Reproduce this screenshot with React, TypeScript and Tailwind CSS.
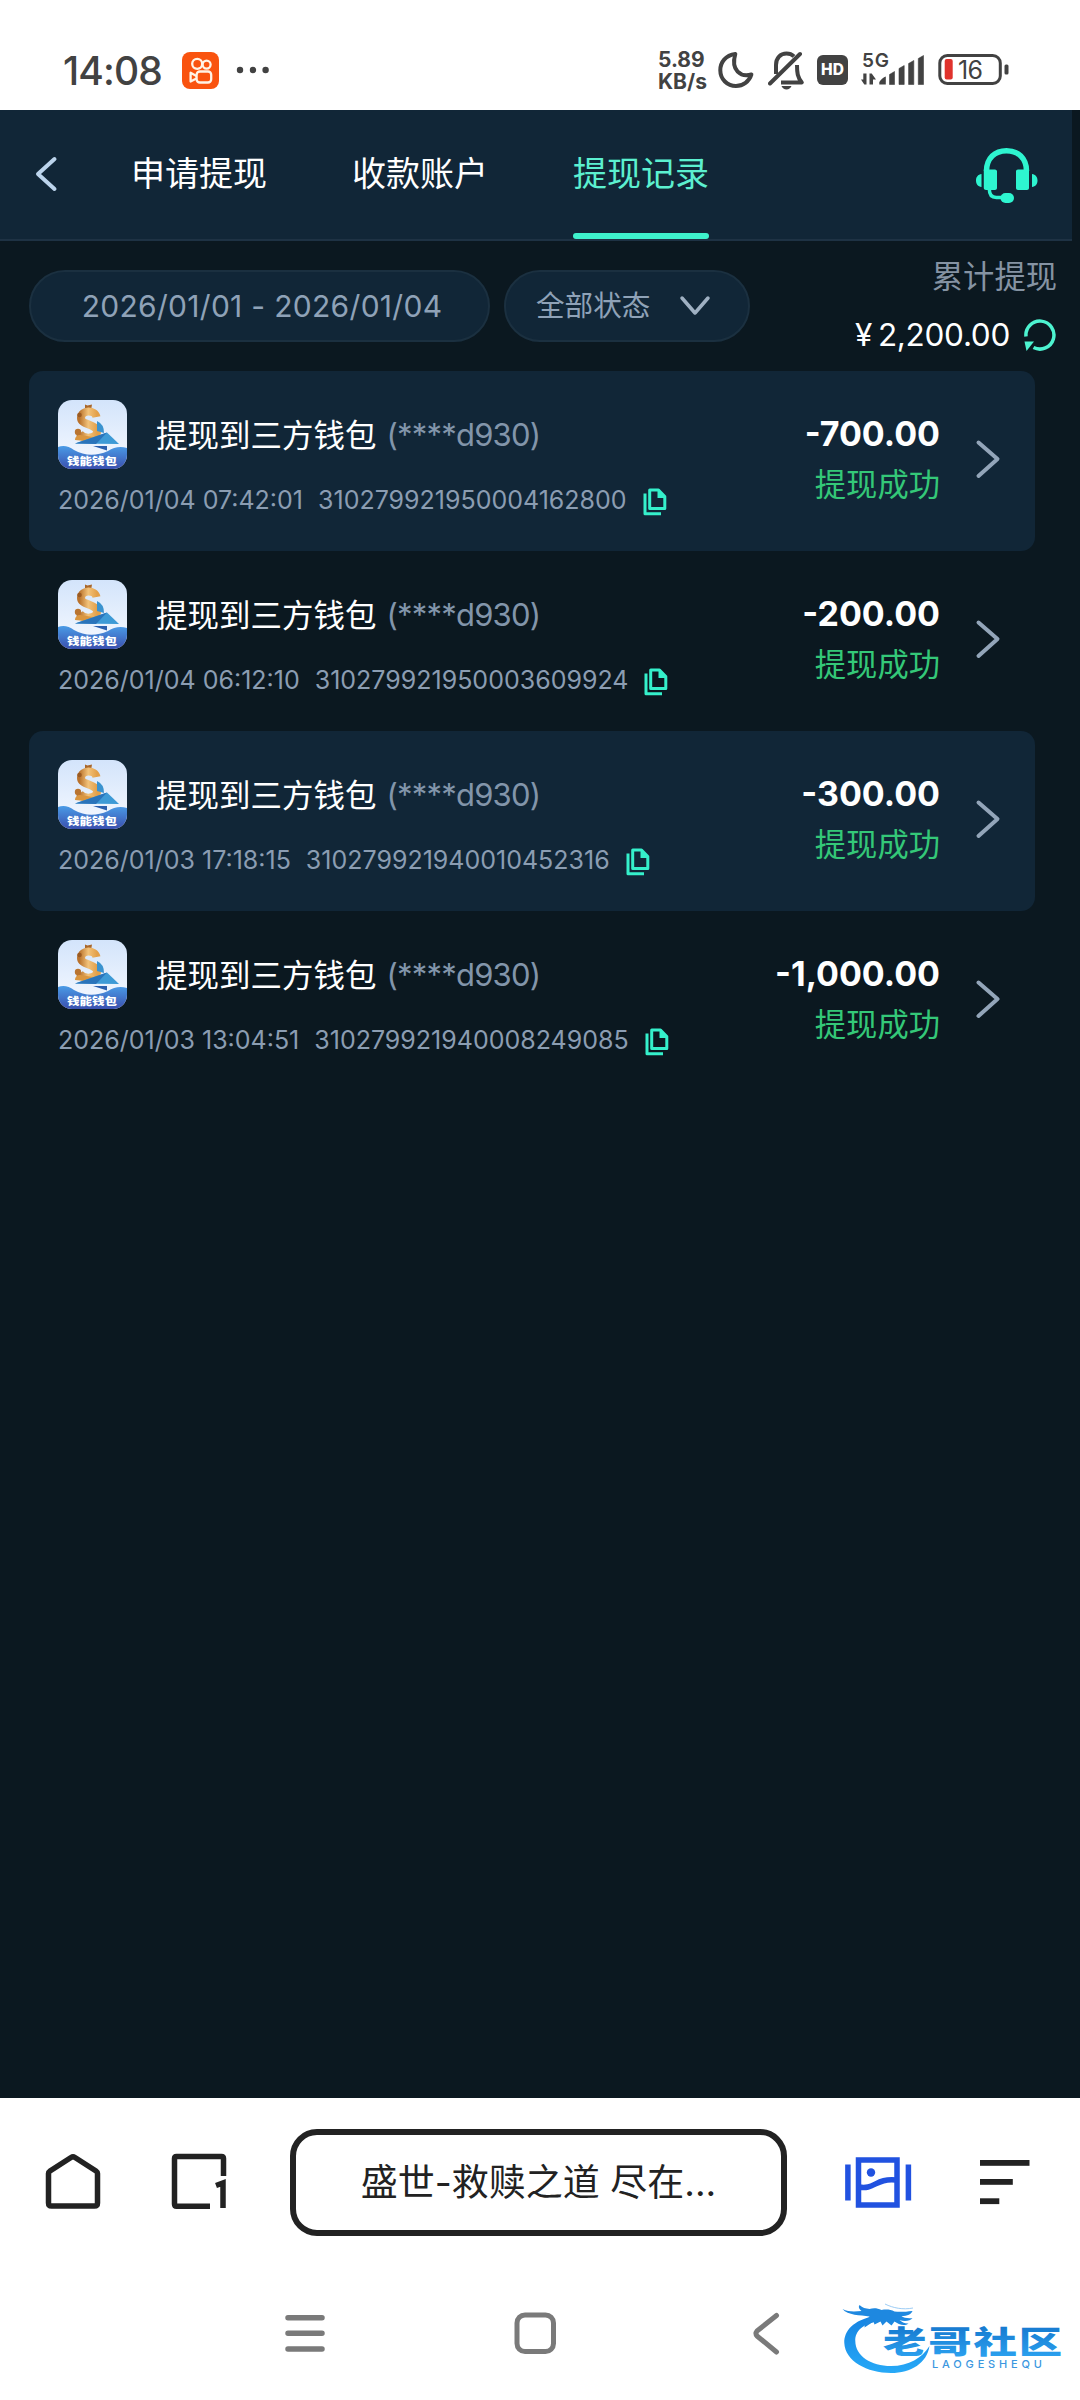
import React from 'react';

interface WithdrawRecord {
  id: string;
  time: string;
  order: string;
  amount: string;
}

const TABS = ['申请提现', '收款账户', '提现记录'];

const RECORDS: WithdrawRecord[] = [
  { id: 'r1', time: '2026/01/04 07:42:01', order: '310279921950004162800', amount: '-700.00' },
  { id: 'r2', time: '2026/01/04 06:12:10', order: '310279921950003609924', amount: '-200.00' },
  { id: 'r3', time: '2026/01/03 17:18:15', order: '310279921940010452316', amount: '-300.00' },
  { id: 'r4', time: '2026/01/03 13:04:51', order: '310279921940008249085', amount: '-1,000.00' },
];

const StatusBar: React.FC = () => (
  <div className="flex h-[110px] shrink-0 items-start bg-white pl-[63px] pr-[71px] pt-[50px] text-[#424242]">
    <div className="flex h-[40px] w-[119px] items-center whitespace-nowrap text-[39px] leading-none font-medium tracking-[-0.9px]">14:08</div>
    <svg className="mt-[2px]" width="37" height="37" viewBox="0 0 37 37" fill="none" stroke="#fff3e6" strokeWidth="2.3">
      <rect width="37" height="37" rx="8" fill="#f9530f" stroke="none" />
      <circle cx="15.2" cy="11.8" r="5" />
      <circle cx="24.6" cy="12.6" r="4" />
      <rect x="14.6" y="19.5" width="14.6" height="11" rx="3.2" />
      <path d="M14.4 24 8.6 20.8v8.8l5.8-3" strokeLinejoin="round" />
    </svg>
    <svg className="ml-[17px] mt-[16px]" width="34" height="8" viewBox="0 0 34 8" fill="#424242">
      <circle cx="4" cy="4" r="3.2" />
      <circle cx="17" cy="4" r="3.2" />
      <circle cx="29.6" cy="4" r="3.2" />
    </svg>

    <div className="ml-auto flex items-start">
      <div className="mt-[-1px] w-[60px] whitespace-nowrap text-[21px] leading-[21.5px] font-bold">
        <div>5.89</div>
        <div>KB/s</div>
      </div>
      <svg className="mt-[1px]" width="36" height="37" viewBox="0 0 36 37" fill="none" stroke="#424242" strokeWidth="4" strokeLinejoin="round">
        <path d="M17.3 3C7.5 4.2 2.3 11.5 2.3 19.2c0 9 7 15.800 15.700 15.800 7 0 13.300-4.600 15.400-11.600C23 26.500 12.500 19.500 17.300 3Z" />
      </svg>
      <svg className="ml-[14px]" width="38" height="40" viewBox="0 0 38 40" fill="none" stroke="#424242" strokeWidth="4">
        <path d="M8 24V15C8 8 12.500 3.500 18.500 3.500c3 0 5.500 1 7.500 2.900" />
        <path d="M2 33.500 32 4" strokeLinecap="round" />
        <path d="M29 15c0 8 .5 12 4.800 17.500H13" strokeLinejoin="round" />
        <path d="M13.500 36h10c-1 2.300-2.600 3.500-5 3.500s-4-1.200-5-3.500Z" fill="#424242" stroke="none" />
      </svg>
      <div className="ml-[11px] mt-[5px] flex h-[30px] w-[31px] items-center justify-center rounded-[6px] bg-[#424242] text-[15.5px] leading-none font-extrabold text-white">HD</div>
      <svg className="ml-[13px] mt-[-4px]" width="66" height="40" viewBox="0 -4 66 40" fill="#424242">
        <text x="1" y="16.500" fontSize="19" fontWeight="600" textLength="27">5G</text>
        <path d="M5.500 23.500v11h-2.200L0 29.500h2.300v-6ZM8.500 34.500v-11h2.200l4.300 6h-3v5Z" />
        <path d="M18.300 34.500v-2.500q3-4.500 6.500-5.500v8Z" />
        <path d="M28.500 34.500V24.500l5-3v13ZM38 34.500V18.500l5.200-3v19ZM47.600 34.500V13.500l5.200-3v24ZM57.300 34.500V8.500l5.200-3v29Z" stroke="#424242" strokeWidth="0.600" strokeLinejoin="round" />
      </svg>
      <svg className="ml-[11px] mt-[3px]" width="71" height="33" viewBox="0 0 71 33" fill="none">
        <rect x="1.800" y="2.500" width="60.500" height="28" rx="7.500" stroke="#424242" strokeWidth="3" />
        <rect x="6.700" y="6" width="8" height="20.500" rx="2" fill="#e0322c" />
        <rect x="66.500" y="11.500" width="4" height="10" rx="1.500" fill="#424242" />
        <text x="20" y="25.600" fontSize="25" textLength="25" fill="#424242">16</text>
      </svg>
    </div>
  </div>
);

const Headset: React.FC = () => (
  <svg width="64" height="58" viewBox="0 0 64 58" fill="#2ef5d0">
    <path d="M11.500 24C11.500 11 20 3.700 31.500 3.700S51.500 11 51.500 24" fill="none" stroke="#2ef5d0" strokeWidth="5.500" />
    <path d="M8.800 22.500H20c1 0 2 .8 2 2V41c0 1.200-1 2-2 2h-9c-1.200 0-2.200-.8-2.200-2ZM54 22.500H43c-1.200 0-2 .8-2 2V41c0 1.200.8 2 2 2h9c1.200 0 2-.8 2-2Z" />
    <path d="M6.500 27v13C3 39.500 1 37 1 33.500S3 27.500 6.500 27ZM57 27v13c3.500-.5 5.500-3 5.500-6.500S60.500 27.500 57 27Z" />
    <path d="M14.300 42c0 6 3 8.500 7 8.500h7" fill="none" stroke="#2ef5d0" strokeWidth="3.500" />
    <rect x="25.500" y="46" width="13.500" height="10" rx="5" />
  </svg>
);

const TopNav: React.FC = () => (
  <div className="mr-[8px] flex h-[131px] shrink-0 items-stretch border-b-2 border-[#1e3244] bg-[#112637] pl-[34px] pr-[33px]">
    <svg className="mt-[45px]" width="24" height="38" viewBox="0 0 24 38" fill="none" stroke="#bcd4ec" strokeWidth="4" strokeLinecap="round" strokeLinejoin="round">
      <path d="M20.500 4 4 19l16.500 15" />
    </svg>
    <div className="ml-[73px] flex gap-[85px]">
      {TABS.map((tab, i) => (
        <div
          key={tab}
          className={
            i === 2
              ? 'flex flex-col justify-between text-[34px] leading-[128px] text-[#5cf0d0]'
              : 'flex flex-col justify-between text-[34px] leading-[128px] text-white'
          }
        >
          <span className="h-[123px]">{tab}</span>
          {i === 2 && <span className="h-[6px] rounded-full bg-[#3ef2cc]" />}
        </div>
      ))}
    </div>
    <div className="ml-auto mt-[37px]">
      <Headset />
    </div>
  </div>
);

const Filters: React.FC = () => (
  <div className="flex h-[130px] shrink-0 items-start pl-[29px] pr-[23px] text-[#8fa2b7]">
    <div className="mt-[29px] flex h-[72px] w-[461px] items-center justify-center whitespace-nowrap rounded-full border-2 border-[#1b3040] bg-[#112637] pl-[5px] pt-px text-[30px] tracking-[0.3px]">
      2026/01/01 - 2026/01/04
    </div>
    <div className="ml-[14px] mt-[29px] flex h-[72px] w-[246px] items-center rounded-full border-2 border-[#1b3040] bg-[#112637] pl-[30px] text-[28.6px]">
      <span className="whitespace-nowrap">全部状态</span>
      <svg className="ml-[29px]" width="32" height="22" viewBox="0 0 32 22" fill="none" stroke="#9fb0c2" strokeWidth="3.500" strokeLinecap="round" strokeLinejoin="round">
        <path d="M3 3l13 15L29 3" />
      </svg>
    </div>
    <div className="ml-auto flex flex-col items-end">
      <div className="mt-[13px] text-[31.300px] leading-[47px] text-[#8593a3]">累计提现</div>
      <div className="mt-[11px] flex h-[46px] items-center whitespace-nowrap text-[31.500px] leading-none tracking-[-0.3px] text-white">
        <span>¥</span>
        <span className="ml-[6px]">2,200.00</span>
        <svg className="ml-[13px]" width="34" height="34" viewBox="0 0 34 34" fill="none" stroke="#4df3d0" strokeWidth="3.500">
          <path d="M3 18.500A14 14 0 1 1 10.500 29.500" />
          <path d="M1.500 23.500h9.500L3.500 33Z" fill="#4df3d0" stroke="none" />
        </svg>
      </div>
    </div>
  </div>
);

const WalletLogo: React.FC<{ id: string }> = ({ id }) => (
  <svg width="69" height="69" viewBox="0 0 69 69">
    <defs>
      <linearGradient id={`${id}-bg`} x1="0" y1="0" x2="0" y2="1">
        <stop offset="0" stopColor="#d3e4fb" />
        <stop offset="1" stopColor="#f7faff" />
      </linearGradient>
      <linearGradient id={`${id}-sea`} x1="0" y1="0" x2="0" y2="1">
        <stop offset="0" stopColor="#4a9be6" />
        <stop offset="1" stopColor="#3a4fae" />
      </linearGradient>
      <linearGradient id={`${id}-gold`} x1="0" y1="0" x2="1" y2="0">
        <stop offset="0" stopColor="#b9722c" />
        <stop offset="0.5" stopColor="#f2c27a" />
        <stop offset="1" stopColor="#e3a04a" />
      </linearGradient>
      <clipPath id={`${id}-clip`}>
        <rect width="69" height="69" rx="14" />
      </clipPath>
    </defs>
    <g clipPath={`url(#${id}-clip)`}>
      <rect width="69" height="69" fill={`url(#${id}-bg)`} />
      <path d="M27 4.500l2.500 1 4.500-1-1 6h-6Z" fill="#a9672b" />
      <path d="M38.500 17C37 9.500 23.500 9.500 23 18c-.3 7 16 6 16 13.500 0 7-13 8.500-17.500 2" fill="none" stroke={`url(#${id}-gold)`} strokeWidth="8" />
      <circle cx="21.500" cy="15" r="2.300" fill="#9a5a22" />
      <circle cx="20" cy="32" r="3.200" fill="#b97430" />
      <path d="M17 40c0-3 2-5 5-5l13 2-8 4Z" fill="#d9953f" />
      <path d="M39 21q7 3 7 12l-7-2Z" fill="#3b93cf" />
      <path d="M17 43.500 49 32.500l12 11.500Z" fill="#3d9ad6" />
      <path d="M17 43.500 49 32.500 38 44Z" fill="#2a74bb" />
      <path d="M35 46h14v4.500Z" fill="#2b5fae" />
      <path d="M0 47q8-3 16 3 16 9 34 1 9-6 19-3v21H0Z" fill={`url(#${id}-sea)`} />
      <text x="9" y="65" fontSize="10.500" fontWeight="900" textLength="50" lengthAdjust="spacingAndGlyphs" fill="#fff">钱能钱包</text>
    </g>
  </svg>
);

const CopyIcon: React.FC = () => (
  <svg width="24" height="28" viewBox="0 0 24 28" fill="none" stroke="#35f0cb" strokeWidth="3" strokeLinejoin="round">
    <path d="M6.700 2H15.500L21.800 8.500V20.500H6.700Z" />
    <path d="M14.500 1.500v8.500H22Z" fill="#35f0cb" stroke="none" />
    <path d="M2 5.500V25.800H18" />
  </svg>
);

const RecordRow: React.FC<{ record: WithdrawRecord; filled: boolean }> = ({ record, filled }) => (
  <div className={filled ? 'flex h-[180px] rounded-[14px] bg-[#112637]' : 'flex h-[180px] rounded-[14px]'}>
    <div className="flex flex-col pl-[29px] pt-[29px]">
      <div className="flex h-[69px] items-center whitespace-nowrap">
        <WalletLogo id={record.id} />
        <span className="ml-[29px] mt-[2px] text-[31.500px] text-white">提现到三方钱包</span>
        <span className="ml-[10px] mt-[2px] text-[31px] tracking-[-0.8px] text-[#8295aa]">(****d930)</span>
      </div>
      <div className="mt-[14px] flex h-[36px] items-center whitespace-nowrap text-[25px] text-[#8b9db2]">
        <span>{record.time}</span>
        <span className="ml-[15px]">{record.order}</span>
        <span className="ml-[16px] mt-px">
          <CopyIcon />
        </span>
      </div>
    </div>
    <div className="ml-auto flex flex-col items-end pt-[41px]">
      <span className="text-[34px] leading-[44px] font-bold text-white">{record.amount}</span>
      <span className="mt-[6px] text-[31.300px] leading-[46px] text-[#34c878]">提现成功</span>
    </div>
    <svg className="ml-[34px] mr-[33px] mt-[67px]" width="28" height="42" viewBox="0 0 28 42" fill="none" stroke="#93a5b9" strokeWidth="4" strokeLinecap="round" strokeLinejoin="round">
      <path d="M4.500 4.500 23.500 21 4.500 38" />
    </svg>
  </div>
);

const BrowserBar: React.FC = () => (
  <div className="flex h-[170px] shrink-0 items-start bg-white pl-[45px] pt-[31px]">
    <svg className="mt-[24px]" width="57" height="58" viewBox="0 0 57 58" fill="none" stroke="#222" strokeWidth="5.500" strokeLinejoin="round">
      <path d="M3.500 20.500Q3.500 19 5 18L26 4.500Q28 3.300 30 4.500L51 18Q52.500 19 52.500 20.500V50Q52.500 53 49.500 53H6.500Q3.500 53 3.500 50Z" />
    </svg>
    <svg className="ml-[68px] mt-[24px]" width="58" height="58" viewBox="0 0 58 58" fill="none" stroke="#222" strokeWidth="5.500">
      <path d="M40 53.200H6.500Q4.500 53.200 4.500 51V5.500Q4.500 3.500 6.500 3.500H51.500Q53.500 3.500 53.500 5.500V23" />
      <path d="M46 32.500l7-2.500V55" />
    </svg>
    <div className="ml-[62px] flex h-[107px] w-[497px] items-center justify-center whitespace-nowrap rounded-[27px] border-[6px] border-[#222] text-[37px] text-[#222]">
      盛世-救赎之道 尽在...
    </div>
    <svg className="ml-[57px] mt-[27px]" width="68" height="52" viewBox="0 0 68 52" fill="none" stroke="#2152e0" strokeWidth="5.500">
      <path d="M3.900 8.500v36M64.400 8.500v36" />
      <rect x="14.500" y="4" width="38.500" height="45" />
      <circle cx="27" cy="16.500" r="4.200" fill="#2152e0" stroke="none" />
      <path d="M15 31c15 3 17-9 37-7" />
    </svg>
    <svg className="ml-[68px] mt-[30px]" width="50" height="46" viewBox="0 0 50 46" fill="#222">
      <rect y="1" width="49.500" height="5.800" />
      <rect y="20" width="32.800" height="5.800" />
      <rect y="39.300" width="19.300" height="5.800" />
    </svg>
  </div>
);

const Watermark: React.FC = () => (
  <svg width="240" height="84" viewBox="0 0 240 84">
    <defs>
      <linearGradient id="wm" x1="0" y1="0" x2="0" y2="1">
        <stop offset="0" stopColor="#1583e2" />
        <stop offset="1" stopColor="#27a9f7" />
      </linearGradient>
      <linearGradient id="wm-text" x1="0" y1="0" x2="0" y2="1">
        <stop offset="0" stopColor="#1475cc" />
        <stop offset="1" stopColor="#2ea5f2" />
      </linearGradient>
    </defs>
    <path d="M36 15C14 19 5 30 5.300 42 6 60 28 72 52 72c20 0 36-10 38.500-27C83 57 70 65 52 65 32 65 16.500 55 16.300 40 16 30 24 22 42 20Z" fill="url(#wm)" />
    {/* dragon head, horns and whiskers */}
    <path d="M3.500 8c6 3 12 2.500 19 2C20 8 19 6 20.500 4c3 3 6 3.500 10 4 4-1.500 8-1 12 1 5-1 9-.5 13 1.500 4 .5 10 .5 18-.5-1 3-5 5-11 5 2 2 7 2.500 11 2-2 3-8 4-13 2 2 2 6 4 9 3.500-4 3-10 1-14-2l-3 4-5-4-4 4-2-4-6 3-1-3-9 6c0-4 2-8 5-11C21 14 9 14.500 3.500 8Z" fill="#1e88e0" />
    <path d="M46 3c8 4 18 6 28 4" fill="none" stroke="#9dcdf5" strokeWidth="1" />
    <text x="0" y="0" transform="translate(44 52) scale(1.400 1)" fontSize="31" fontWeight="900" textLength="128" fill="url(#wm-text)">
      老哥社区
    </text>
    <text x="93" y="67" fontSize="11" fontWeight="500" textLength="110" fill="#3b97df">LAOGESHEQU</text>
  </svg>
);

const SystemNav: React.FC = () => (
  <div className="flex h-[132px] shrink-0 items-start bg-white pl-[284px]">
    <svg className="mt-[44px]" width="42" height="42" viewBox="0 0 42 42" stroke="#7a7a7a" strokeWidth="5.500" strokeLinecap="round">
      <path d="M4 5.700h34M4 21.300h34M4 37h34" />
    </svg>
    <svg className="ml-[187px] mt-[43px]" width="44" height="44" viewBox="0 0 44 44" fill="none" stroke="#7a7a7a" strokeWidth="5">
      <rect x="4" y="4" width="36.500" height="36.500" rx="8" />
    </svg>
    <svg className="ml-[194px] mt-[43px]" width="30" height="46" viewBox="0 0 30 46" fill="none" stroke="#7a7a7a" strokeWidth="5" strokeLinecap="round" strokeLinejoin="round">
      <path d="M25.500 4.500 6 20Q4 22.500 6 25L25.500 41" />
    </svg>
    <div className="ml-[58px] mt-[33px]">
      <Watermark />
    </div>
  </div>
);

export default function App() {
  return (
    <div className="flex h-[2400px] w-[1080px] flex-col overflow-hidden bg-[#0b1820] font-['Inter','Noto_Sans_CJK_SC',sans-serif]">
      <StatusBar />
      <TopNav />
      <Filters />
      <div className="ml-[29px] mr-[45px] flex grow flex-col">
        {RECORDS.map((record, i) => (
          <RecordRow key={record.id} record={record} filled={i % 2 === 0} />
        ))}
      </div>
      <BrowserBar />
      <SystemNav />
    </div>
  );
}
